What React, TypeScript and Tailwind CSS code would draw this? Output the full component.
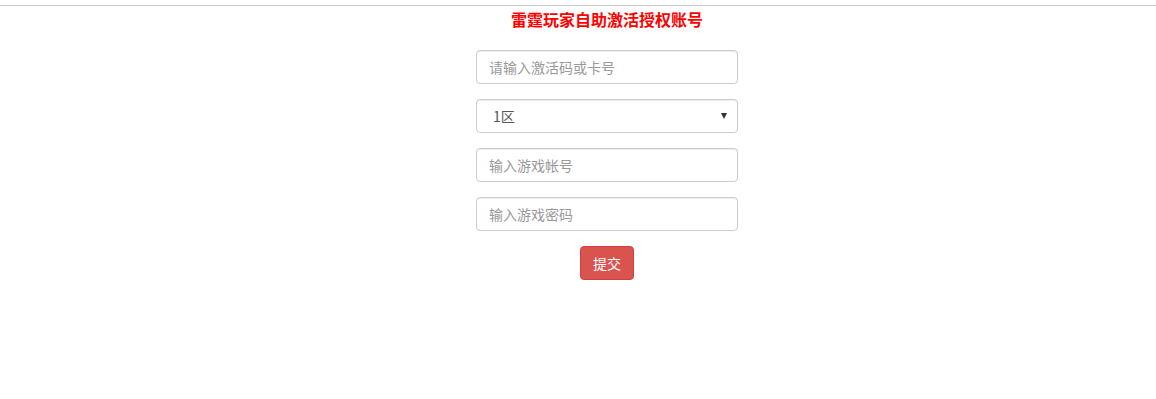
import { useState } from "react";

const inputCls =
  "block w-[262px] h-[34px] px-3 rounded border border-[#ccc] bg-white text-[14px] text-[#555] placeholder:text-[#999] shadow-[inset_0_1px_1px_rgba(0,0,0,0.075)] outline-none focus:border-[#66afe9]";

export default function App() {
  const [zone, setZone] = useState("1");

  return (
    <div
      className="min-h-[399px] bg-white"
      style={{ fontFamily: '"Microsoft YaHei", "Noto Sans CJK SC", "Liberation Sans", sans-serif' }}
    >
      <div className="mt-[5px] border-t border-[#ccc]" />
      <div className="flex flex-col items-center pl-[58px]">
        <h1 className="mt-[2px] text-[16px] leading-[22px] font-bold text-[#f00]">
          雷霆玩家自助激活授权账号
        </h1>
        <form className="mt-[20px] flex flex-col items-center gap-[15px]">
          <input className={inputCls} placeholder="请输入激活码或卡号" />
          <div className="relative">
            <select
              value={zone}
              onChange={(e) => setZone(e.target.value)}
              className={`${inputCls} appearance-none pl-4`}
            >
              <option value="1">1区</option>
              <option value="2">2区</option>
              <option value="3">3区</option>
            </select>
            <span className="pointer-events-none absolute right-[11px] top-[14px] h-0 w-0 border-x-[3.5px] border-t-[6px] border-x-transparent border-t-[#333]" />
          </div>
          <input className={inputCls} placeholder="输入游戏帐号" />
          <input className={inputCls} type="password" placeholder="输入游戏密码" />
          <button
            type="button"
            className="h-[34px] w-[54px] rounded border border-[#d43f3a] bg-[#d9534f] text-[14px] text-white"
          >
            提交
          </button>
        </form>
      </div>
    </div>
  );
}
